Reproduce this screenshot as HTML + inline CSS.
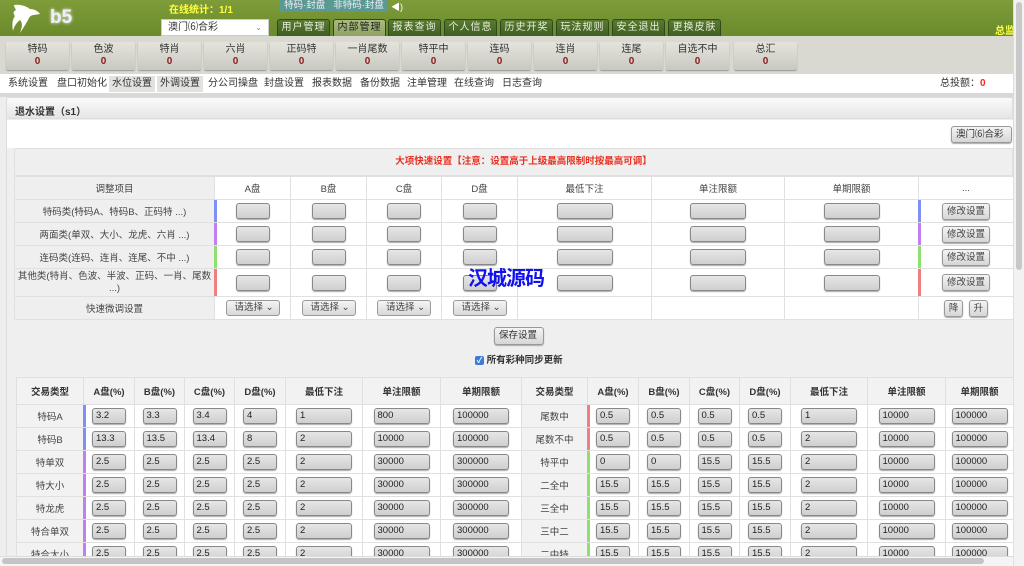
<!DOCTYPE html>
<html><head><meta charset="utf-8"><style>
*{box-sizing:border-box;margin:0;padding:0}
body{width:1024px;height:566px;overflow:hidden;background:#eee;font-family:"Liberation Sans","Noto Sans CJK SC",sans-serif;font-size:10px;color:#333;position:relative}
.a{position:absolute}
#hd{left:0;top:0;width:1013px;height:36px;background:linear-gradient(#7f9c3a,#6a8a2c)}
.tab{position:absolute;top:19px;height:17px;width:53px;background:linear-gradient(#5a7a34,#3f5f22);border:1px solid #2f4a18;border-bottom:none;border-radius:3px 3px 0 0;color:#e8eed8;font-size:10px;text-align:center;line-height:16px;letter-spacing:1px;white-space:nowrap}
.tab.on{background:linear-gradient(#a9bb80,#8ea262);color:#222}
#r2{left:0;top:36px;width:1013px;height:38px;background:#d9d9d1}
.cb{position:absolute;top:42px;width:63px;height:28px;background:linear-gradient(#e4e4dc,#c9c9c1);border-radius:2px;box-shadow:0 1px 1px #999;text-align:center;font-size:10px;line-height:12px;padding-top:2px}
.cb b{display:block;color:#8a1a1a;font-size:10px}
#r3{left:0;top:74px;width:1013px;height:23px;background:#fff;border-bottom:4px solid #d8d8d8}
.m{position:absolute;top:78px;font-size:10px;color:#333;line-height:12px;white-space:nowrap}
.m.on{background:#e2e2de;padding:2px 3px;top:76px;margin-left:-3px}
#ph{left:6px;top:97px;width:1007px;height:22px;background:linear-gradient(#fafafa,#e6e6e6);border:1px solid #ddd;font-weight:bold;font-size:10px;padding:5px 8px}
#ct{left:6px;top:119px;width:1007px;height:440px;background:#efefef;border-left:1px solid #ddd}
table{border-collapse:collapse;table-layout:fixed;position:absolute}
td{border:1px solid #e0e0e0;text-align:center;font-size:9.5px;color:#444;background:#fff}
.inp{display:inline-block;height:16px;border:1px solid #888;border-radius:3px;background:linear-gradient(#e6e6e6,#cfcfcf);box-shadow:0 1px 1px #aaa;vertical-align:middle;text-align:left;font-size:9.5px;line-height:14px;padding-left:3px;color:#222}
.btn{display:inline-block;border:1px solid #999;border-radius:3px;background:linear-gradient(#f4f4f4,#d6d6d6);font-size:9.5px;padding:2px 4px;line-height:11px;box-shadow:0 1px 1px #aaa;white-space:nowrap}
.sel{display:inline-block;width:54px;height:16px;border:1px solid #999;border-radius:3px;background:linear-gradient(#f4f4f4,#d8d8d8);font-size:9.5px;line-height:14px;text-align:left;padding-left:8px}
.bar{position:relative}
.bar:before{content:"";position:absolute;left:-1px;top:0;bottom:0;width:3px;background:var(--c)}
th{border:1px solid #e0e0e0;font-size:9.5px;background:#f2f2f2;color:#333}
</style></head><body>
<div id="hd" class="a">
<svg class="a" style="left:10px;top:3px" width="32" height="32" viewBox="0 0 32 32"><path d="M4 2 C10 1 16 3 20 6 C24 6 28 8 30 11 L24 12 C22 12 20 13 19 15 C17 19 14 24 10 30 C12 24 13 20 10 17 C6 20 4 24 3 28 C2 22 2 17 5 13 C3 11 3 8 6 7 C5 5 4 4 4 2Z" fill="#fff"/></svg>
<div class="a" style="left:50px;top:7px;color:#eef;font-size:19px;font-weight:bold;text-shadow:0 0 3px #fff">b5</div>
<div class="a" style="left:169px;top:1px;color:#ffff40;font-weight:bold;font-size:10px">在线统计：1/1</div>
<div class="a" style="left:280px;top:0;width:108px;height:12px;background:#5b9a90;color:#eef;font-size:9.5px;line-height:12px;text-align:center;white-space:nowrap">特码·封盘&nbsp;&nbsp;&nbsp;非特码·封盘</div>
<div class="a" style="left:391px;top:0;color:#fff;font-size:9px">◀)</div>
<div class="a" style="left:161px;top:19px;width:108px;height:17px;background:#fff;border:1px solid #ccc;font-size:10px;line-height:15px;padding-left:6px">澳门⑹合彩<span style="position:absolute;right:6px;color:#888;font-size:8px">⌄</span></div>
<div class="tab" style="left:277px">用户管理</div><div class="tab on" style="left:333px">内部管理</div><div class="tab" style="left:388px">报表查询</div><div class="tab" style="left:444px">个人信息</div><div class="tab" style="left:500px">历史开奖</div><div class="tab" style="left:556px">玩法规则</div><div class="tab" style="left:612px">安全退出</div><div class="tab" style="left:668px">更换皮肤</div>
<div class="a" style="left:995px;top:22px;color:#ffff40;font-weight:bold;font-size:10px;white-space:nowrap">总监</div>
</div>
<div class="a" style="left:1013px;top:0;width:11px;height:566px;background:#f2f2f2;border-left:1px solid #ddd"></div>
<div class="a" style="left:1016px;top:2px;width:6px;height:268px;background:#c8c8c8;border-radius:3px"></div>
<div id="r2" class="a"></div>
<div class="cb" style="left:6px">特码<b>0</b></div><div class="cb" style="left:72px">色波<b>0</b></div><div class="cb" style="left:138px">特肖<b>0</b></div><div class="cb" style="left:204px">六肖<b>0</b></div><div class="cb" style="left:270px">正码特<b>0</b></div><div class="cb" style="left:336px">一肖尾数<b>0</b></div><div class="cb" style="left:402px">特平中<b>0</b></div><div class="cb" style="left:468px">连码<b>0</b></div><div class="cb" style="left:534px">连肖<b>0</b></div><div class="cb" style="left:600px">连尾<b>0</b></div><div class="cb" style="left:666px">自选不中<b>0</b></div><div class="cb" style="left:734px">总汇<b>0</b></div>
<div id="r3" class="a"></div>
<div class="m" style="left:8px">系统设置</div><div class="m" style="left:57px">盘口初始化</div><div class="m on" style="left:112px">水位设置</div><div class="m on" style="left:160px">外调设置</div><div class="m" style="left:208px">分公司操盘</div><div class="m" style="left:264px">封盘设置</div><div class="m" style="left:312px">报表数据</div><div class="m" style="left:360px">备份数据</div><div class="m" style="left:407px">注单管理</div><div class="m" style="left:454px">在线查询</div><div class="m" style="left:502px">日志查询</div>
<div class="m" style="left:940px">总投额：<b style="color:#f22">0</b></div>
<div id="ph" class="a">退水设置（s1）</div>
<div id="ct" class="a"></div>
<div class="a" style="left:7px;top:120px;width:1006px;height:28px;background:#fff"></div>
<div class="a btn" style="left:951px;top:126px;width:61px;height:17px">澳门⑹合彩</div>
<div class="a" style="left:14px;top:148px;width:999px;height:28px;background:#efefef;border:1px solid #e0e0e0;text-align:center;color:#e83020;font-weight:bold;font-size:9.5px;line-height:26px;padding-left:20px">大项快速设置【注意：设置高于上级最高限制时按最高可调】</div>
<table style="left:14px;top:176px;width:999px">
<colgroup><col style="width:200px"><col style="width:76px"><col style="width:76px"><col style="width:75px"><col style="width:76px"><col style="width:134px"><col style="width:133px"><col style="width:134px"><col style="width:95px"></colgroup>
<tr style="height:23px"><td style="background:#efefef">调整项目</td><td>A盘</td><td>B盘</td><td>C盘</td><td>D盘</td><td>最低下注</td><td>单注限额</td><td>单期限额</td><td>...</td></tr>
<tr style="height:23px"><td style="background:#efefef">特码类(特码A、特码B、正码特 ...)</td><td class="bar" style="--c:#8090f0"><span class="inp" style="width:34px"></span></td><td><span class="inp" style="width:34px"></span></td><td><span class="inp" style="width:34px"></span></td><td><span class="inp" style="width:34px"></span></td><td><span class="inp" style="width:56px"></span></td><td><span class="inp" style="width:56px"></span></td><td><span class="inp" style="width:56px"></span></td><td class="bar" style="--c:#8090f0"><span class="btn">修改设置</span></td></tr>
<tr style="height:23px"><td style="background:#efefef">两面类(单双、大小、龙虎、六肖 ...)</td><td class="bar" style="--c:#c080f0"><span class="inp" style="width:34px"></span></td><td><span class="inp" style="width:34px"></span></td><td><span class="inp" style="width:34px"></span></td><td><span class="inp" style="width:34px"></span></td><td><span class="inp" style="width:56px"></span></td><td><span class="inp" style="width:56px"></span></td><td><span class="inp" style="width:56px"></span></td><td class="bar" style="--c:#c080f0"><span class="btn">修改设置</span></td></tr>
<tr style="height:23px"><td style="background:#efefef">连码类(连码、连肖、连尾、不中 ...)</td><td class="bar" style="--c:#90e070"><span class="inp" style="width:34px"></span></td><td><span class="inp" style="width:34px"></span></td><td><span class="inp" style="width:34px"></span></td><td><span class="inp" style="width:34px"></span></td><td><span class="inp" style="width:56px"></span></td><td><span class="inp" style="width:56px"></span></td><td><span class="inp" style="width:56px"></span></td><td class="bar" style="--c:#90e070"><span class="btn">修改设置</span></td></tr>
<tr style="height:28px"><td style="background:#efefef;line-height:12px">其他类(特肖、色波、半波、正码、一肖、尾数 ...)</td><td class="bar" style="--c:#f08080"><span class="inp" style="width:34px"></span></td><td><span class="inp" style="width:34px"></span></td><td><span class="inp" style="width:34px"></span></td><td><span class="inp" style="width:34px"></span></td><td><span class="inp" style="width:56px"></span></td><td><span class="inp" style="width:56px"></span></td><td><span class="inp" style="width:56px"></span></td><td class="bar" style="--c:#f08080"><span class="btn">修改设置</span></td></tr>
<tr style="height:23px"><td style="background:#efefef">快速微调设置</td><td><span class="sel">请选择 ⌄</span></td><td><span class="sel">请选择 ⌄</span></td><td><span class="sel">请选择 ⌄</span></td><td><span class="sel">请选择 ⌄</span></td><td></td><td></td><td></td><td><span class="btn">降</span> &nbsp;<span class="btn">升</span></td></tr>
</table>
<div class="a" style="left:468px;top:262px;color:#1010f0;font-weight:bold;font-size:20px;letter-spacing:-1px;white-space:nowrap">汉城源码</div>
<div class="a btn" style="left:494px;top:327px;width:50px;height:18px;line-height:12px">保存设置</div>
<div class="a" style="left:475px;top:352px;font-size:9.5px;font-weight:bold;white-space:nowrap"><span style="display:inline-block;width:9px;height:9px;background:#3a7bd5;border-radius:2px;color:#fff;font-size:8px;line-height:9px;text-align:center;vertical-align:middle">✓</span> 所有彩种同步更新</div>
<table style="left:16px;top:377px;width:505px">
<colgroup><col style="width:67px"><col style="width:51px"><col style="width:50px"><col style="width:50px"><col style="width:51px"><col style="width:77px"><col style="width:78px"><col style="width:81px"></colgroup>
<tr style="height:27px"><th>交易类型</th><th>A盘(%)</th><th>B盘(%)</th><th>C盘(%)</th><th>D盘(%)</th><th>最低下注</th><th>单注限额</th><th>单期限额</th></tr>
</table>
<table style="left:521px;top:377px;width:492px">
<colgroup><col style="width:66px"><col style="width:51px"><col style="width:51px"><col style="width:50px"><col style="width:51px"><col style="width:77px"><col style="width:78px"><col style="width:68px"></colgroup>
<tr style="height:27px"><th>交易类型</th><th>A盘(%)</th><th>B盘(%)</th><th>C盘(%)</th><th>D盘(%)</th><th>最低下注</th><th>单注限额</th><th>单期限额</th></tr>
</table>
<div id="rows"></div>
<div class="a" style="left:0;top:556px;width:1013px;height:10px;background:#f4f4f4;border-top:1px solid #ddd"></div>
<div class="a" style="left:2px;top:558px;width:982px;height:6px;background:#c4c4c4;border-radius:3px"></div>
<script>
var L=[["特码A","#8090f0","3.2","3.3","3.4","4","1","800","100000"],["特码B","#8090f0","13.3","13.5","13.4","8","2","10000","100000"],["特单双","#c080f0","2.5","2.5","2.5","2.5","2","30000","300000"],["特大小","#c080f0","2.5","2.5","2.5","2.5","2","30000","300000"],["特龙虎","#c080f0","2.5","2.5","2.5","2.5","2","30000","300000"],["特合单双","#c080f0","2.5","2.5","2.5","2.5","2","30000","300000"],["特合大小","#c080f0","2.5","2.5","2.5","2.5","2","30000","300000"]];
var R=[["尾数中","#f08080","0.5","0.5","0.5","0.5","1","10000","100000"],["尾数不中","#f08080","0.5","0.5","0.5","0.5","2","10000","100000"],["特平中","#90e070","0","0","15.5","15.5","2","10000","100000"],["二全中","#90e070","15.5","15.5","15.5","15.5","2","10000","100000"],["三全中","#90e070","15.5","15.5","15.5","15.5","2","10000","100000"],["三中二","#90e070","15.5","15.5","15.5","15.5","2","10000","100000"],["二中特","#90e070","15.5","15.5","15.5","15.5","2","10000","100000"]];
function mk(d,left,w,cols){var h='<table style="left:'+left+'px;top:404px;width:'+w+'px"><colgroup>';cols.forEach(function(c){h+='<col style="width:'+c+'px">'});h+='</colgroup>';
d.forEach(function(r){h+='<tr style="height:23px"><td style="background:#f2f2f2">'+r[0]+'</td>';for(var i=2;i<9;i++){var iw=i<6?34:56;h+='<td'+(i==2?' class="bar" style="--c:'+r[1]+'"':'')+'><span class="inp" style="width:'+iw+'px">'+r[i]+'</span></td>'}h+='</tr>'});return h+'</table>'}
document.getElementById('rows').outerHTML=mk(L,16,505,[67,51,50,50,51,77,78,81])+mk(R,521,492,[66,51,51,50,51,77,78,68]);
</script>
</body></html>
